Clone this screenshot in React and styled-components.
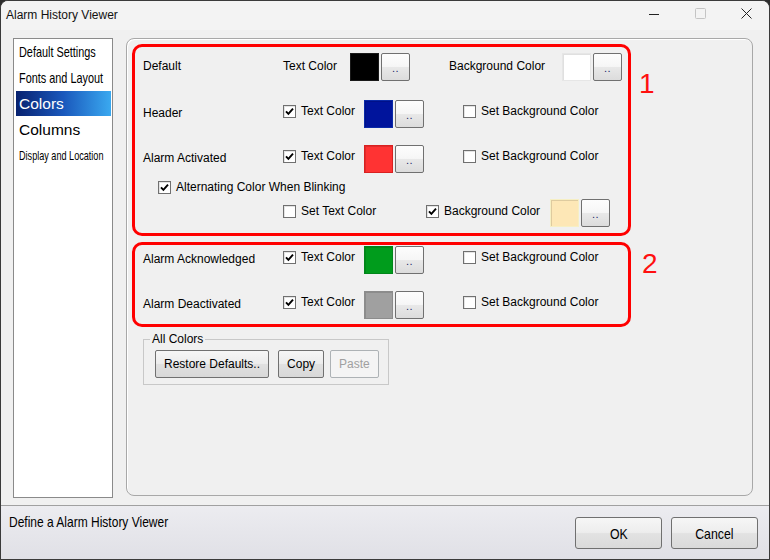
import React from 'react';
import styled, { createGlobalStyle } from 'styled-components';

const GlobalStyle = createGlobalStyle`
  html, body {
    margin: 0;
    padding: 0;
    background: #2d2d2d;
  }
  * {
    box-sizing: border-box;
  }
`

function CheckMark() {
  return (
    <svg width="9" height="9" viewBox="0 0 9 9">
      <path d="M1 4.3 L3.4 6.8 L8 1.6" stroke="#000" strokeWidth="1.9" fill="none" />
    </svg>
  )
}

function Check({ checked, children, w, lift }) {
  return (
    <CheckLabel $lift={lift}>
      <CheckBox>{checked && <CheckMark />}</CheckBox>
      <Text $w={w}>{children}</Text>
    </CheckLabel>
  )
}

function ColorPick({ color, edge }) {
  return (
    <>
      <Swatch $color={color} $edge={edge} />
      <Browse>..</Browse>
    </>
  )
}

function App() {
  return (
    <>
      <GlobalStyle />
      <Window>
        <TitleBar>
          <Title>Alarm History Viewer</Title>
          <Caption>
            <CaptionButton>
              <svg width="10" height="10" viewBox="0 0 10 10">
                <path d="M0 5.5 H10" stroke="#222" strokeWidth="1" />
              </svg>
            </CaptionButton>
            <CaptionButton>
              <svg width="11" height="11" viewBox="0 0 11 11">
                <rect x="0.5" y="0.5" width="10" height="10" rx="1" stroke="#c4c4c4" fill="none" />
              </svg>
            </CaptionButton>
            <CaptionButton>
              <svg width="11" height="11" viewBox="0 0 11 11">
                <path d="M0.5 0.5 L10.5 10.5 M10.5 0.5 L0.5 10.5" stroke="#222" strokeWidth="1" />
              </svg>
            </CaptionButton>
          </Caption>
        </TitleBar>

        <Body>
          <NavList>
            <NavItem $size={14.5}><Narrow $scale={0.75}>Default Settings</Narrow></NavItem>
            <NavItem $size={14.5}><Narrow $scale={0.75}>Fonts and Layout</Narrow></NavItem>
            <NavItem $size={15.5} $selected>Colors</NavItem>
            <NavItem $size={15.5}>Columns</NavItem>
            <NavItem $size={13}><Narrow $scale={0.7}>Display and Location</Narrow></NavItem>
          </NavList>

          <Panel>
            <BoxRow>
              <RedBox $pad="6px 0 6px 8px">
                <Row>
                  <Label>Default</Label>
                  <Field>
                    <Text $w={67} $lift={2}>Text Color</Text>
                    <ColorPick color="#000000" edge="#1a1a1a" />
                  </Field>
                  <Field>
                    <Text $w={113} $lift={2}>Background Color</Text>
                    <ColorPick color="#ffffff" edge="#e6e6e6" />
                  </Field>
                </Row>

                <Row $top={19}>
                  <Label>Header</Label>
                  <Field>
                    <Check checked w={63}>Text Color</Check>
                    <ColorPick color="#00149c" edge="#0a2aa8" />
                  </Field>
                  <Field $indent={14}>
                    <Check>Set Background Color</Check>
                  </Field>
                </Row>

                <Row $top={17}>
                  <Label>Alarm Activated</Label>
                  <Field>
                    <Check checked w={63}>Text Color</Check>
                    <ColorPick color="#ff3333" edge="#d92020" />
                  </Field>
                  <Field $indent={14}>
                    <Check>Set Background Color</Check>
                  </Field>
                </Row>

                <SubRow>
                  <Check checked lift={0}>Alternating Color When Blinking</Check>
                </SubRow>

                <Row $cols="140px 143px 1fr">
                  <span />
                  <Field>
                    <Check lift={4}>Set Text Color</Check>
                  </Field>
                  <Field>
                    <Check checked w={106} lift={4}>Background Color</Check>
                    <ColorPick color="#fde7b6" edge="#f6efc4" />
                  </Field>
                </Row>
              </RedBox>
              <Marker $top={26} $left={8}>1</Marker>
            </BoxRow>

            <BoxRow $top={6}>
              <RedBox $pad="1px 0 5px 8px">
                <Row>
                  <Label>Alarm Acknowledged</Label>
                  <Field>
                    <Check checked w={63}>Text Color</Check>
                    <ColorPick color="#009c1c" edge="#00861a" />
                  </Field>
                  <Field $indent={14}>
                    <Check>Set Background Color</Check>
                  </Field>
                </Row>

                <Row $top={17}>
                  <Label>Alarm Deactivated</Label>
                  <Field>
                    <Check checked w={63}>Text Color</Check>
                    <ColorPick color="#a0a0a0" edge="#8c8c8c" />
                  </Field>
                  <Field $indent={14}>
                    <Check>Set Background Color</Check>
                  </Field>
                </Row>
              </RedBox>
              <Marker $top={8} $left={11}>2</Marker>
            </BoxRow>

            <Group>
              <Legend>All Colors</Legend>
              <ButtonRow>
                <PushButton>Restore Defaults..</PushButton>
                <PushButton>Copy</PushButton>
                <PushButton disabled>Paste</PushButton>
              </ButtonRow>
            </Group>
          </Panel>
        </Body>

        <StatusBar>
          <StatusText><Narrow $scale={0.8}>Define a Alarm History Viewer</Narrow></StatusText>
          <Actions>
            <DialogButton><Narrow $center>OK</Narrow></DialogButton>
            <DialogButton><Narrow $center>Cancel</Narrow></DialogButton>
          </Actions>
        </StatusBar>
      </Window>
    </>
  )
}

export default App;

const Window = styled.div`
  width: 770px;
  height: 560px;
  border: 1px solid #3a3a3a;
  border-radius: 8px 8px 0 0;
  overflow: hidden;
  background: #f0f0f0;
  display: flex;
  flex-direction: column;
  font-family: "Liberation Sans", Arial, sans-serif;
  font-size: 12px;
  color: #000;
`

// the dialog uses a condensed face; squeeze Liberation Sans to narrow widths
const Narrow = styled.span`
  display: inline-block;
  white-space: nowrap;
  transform: scaleX(${p => p.$scale || 0.82});
  transform-origin: ${p => (p.$center ? 'center' : 'left')} center;
`

const TitleBar = styled.div`
  height: 29px;
  display: flex;
  align-items: center;
  justify-content: space-between;
  background: #f3f3f3;
`

const Title = styled.div`
  padding-left: 5px;
  padding-bottom: 2px;
  font-size: 12px;
  color: #111;
`

const Caption = styled.div`
  display: flex;
  height: 100%;
`

const CaptionButton = styled.div`
  width: 46px;
  height: 100%;
  display: flex;
  align-items: center;
  justify-content: center;
  padding-bottom: 4px;
`

const Body = styled.div`
  height: 475px;
  display: flex;
  align-items: flex-start;
  gap: 13px;
  padding: 8px 16px 0 12px;
`

const NavList = styled.div`
  width: 100px;
  height: 460px;
  background: #fff;
  border: 1px solid #8a8a8a;
  padding: 0 1px;
`

const NavItem = styled.div`
  height: 25px;
  margin-bottom: 1px;
  padding-left: ${p => (p.$selected ? 3 : 4)}px;
  margin-left: ${p => (p.$selected ? 1 : 0)}px;
  display: flex;
  align-items: center;
  white-space: nowrap;
  overflow: hidden;
  font-size: ${p => p.$size}px;
  color: ${p => (p.$selected ? '#fff' : '#000')};
  background: ${p => (p.$selected ? 'linear-gradient(90deg, #082270 0%, #1a58bc 50%, #3aa9f0 100%)' : 'transparent')};
`

const Panel = styled.div`
  width: 628px;
  height: 458px;
  border: 1px solid #a8a8a8;
  border-radius: 8px;
  box-shadow: inset 1px 1px 0 #fff;
  padding: 5px 0 0 5px;
`

const BoxRow = styled.div`
  display: flex;
  align-items: flex-start;
  margin-top: ${p => p.$top || 0}px;
`

const RedBox = styled.div`
  width: 499px;
  border: 3px solid #ff0000;
  border-radius: 10px;
  padding: ${p => p.$pad};
`

const Marker = styled.div`
  margin-top: ${p => p.$top}px;
  margin-left: ${p => p.$left}px;
  font-size: 28px;
  line-height: 28px;
  color: #ff1010;
`

const Row = styled.div`
  display: grid;
  grid-template-columns: ${p => p.$cols || '140px 166px 1fr'};
  align-items: center;
  height: 28px;
  margin-top: ${p => p.$top || 0}px;
`

const SubRow = styled.div`
  display: flex;
  align-items: center;
  height: 26px;
  padding-left: 15px;
  padding-top: 2px;
`

const Label = styled.span`
  margin-bottom: 2px;
`

const Field = styled.div`
  display: flex;
  align-items: center;
  padding-left: ${p => p.$indent || 0}px;
`

const CheckLabel = styled.label`
  display: flex;
  align-items: center;
  flex-shrink: 0;
  margin-bottom: ${p => (p.$lift ?? 6)}px;
`

const Text = styled.span`
  width: ${p => (p.$w ? `${p.$w}px` : 'auto')};
  flex-shrink: 0;
  margin-bottom: ${p => p.$lift || 0}px;
  white-space: nowrap;
`

const CheckBox = styled.span`
  width: 13px;
  height: 13px;
  flex-shrink: 0;
  margin-right: 5px;
  background: #fff;
  border: 1px solid #707070;
  box-shadow: inset 1px 1px 0 #e4e4e4;
  display: flex;
  align-items: center;
  justify-content: center;
`

const Swatch = styled.span`
  width: 29px;
  height: 28px;
  flex-shrink: 0;
  background: ${p => p.$color};
  border: 1px solid ${p => p.$edge};
  box-shadow: inset 1px 1px 0 rgba(0, 0, 0, 0.12);
`

const Browse = styled.span`
  width: 29px;
  height: 28px;
  margin-left: 2px;
  flex-shrink: 0;
  border: 1px solid #707070;
  border-radius: 2px;
  background: linear-gradient(#fdfdfd 0%, #f6f6f6 48%, #e8e8e8 52%, #dcdcdc 100%);
  display: flex;
  align-items: flex-end;
  justify-content: center;
  padding-bottom: 6px;
  font-size: 11px;
  line-height: 11px;
  color: #1b2a6a;
  letter-spacing: 0.5px;
`

const Group = styled.fieldset`
  width: 246px;
  margin: 5px 0 0 11px;
  padding: 4px 11px 6px;
  border: 1px solid #c8c8c8;
  min-width: 0;
`

const Legend = styled.legend`
  padding: 0 2px;
  margin-left: -5px;
  line-height: 14px;
  font-size: 12px;
`

const ButtonRow = styled.div`
  display: flex;
  gap: 9px;
  & > :last-child {
    margin-left: -3px;
  }
`

const PushButton = styled.button`
  height: 28px;
  padding: 0 8px;
  white-space: nowrap;
  flex-shrink: 0;
  font-family: "Liberation Sans", Arial, sans-serif;
  font-size: 12px;
  color: #000;
  border: 1px solid #707070;
  border-radius: 2px;
  background: linear-gradient(#f6f6f6 0%, #ececec 48%, #e0e0e0 52%, #d8d8d8 100%);
  &:disabled {
    color: #a0a0a0;
    border-color: #adb2b5;
    background: #f4f4f4;
  }
`

const StatusBar = styled.div`
  flex: 1;
  border-top: 1px solid #a0a0a0;
  background: linear-gradient(#ececf0, #e0e0e6);
  display: flex;
  justify-content: space-between;
  align-items: flex-start;
  padding: 0 11px 0 8px;
`

const StatusText = styled.div`
  margin-top: 8px;
  font-size: 15px;
  line-height: 16px;
`

const Actions = styled.div`
  display: flex;
  gap: 9px;
  margin-top: 11px;
`

const DialogButton = styled.button`
  width: 87px;
  height: 32px;
  font-family: "Liberation Sans", Arial, sans-serif;
  font-size: 15px;
  color: #000;
  border: 1px solid #707070;
  border-radius: 3px;
  background: linear-gradient(#f6f6f6 0%, #ededed 48%, #e2e2e2 52%, #dadada 100%);
`
